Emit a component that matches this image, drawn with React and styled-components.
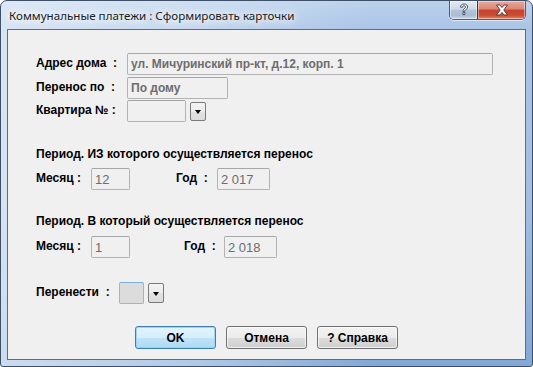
import React from "react";
import styled, { createGlobalStyle } from "styled-components";

const Global = createGlobalStyle`
  html, body { margin: 0; padding: 0; background: #ffffff; }
  * { box-sizing: border-box; }
`;

const Window = styled.div`
  width: 533px;
  height: 367px;
  border: 1px solid #3e4f66;
  border-radius: 7px 7px 3px 3px;
  background:
    linear-gradient(to right, rgba(235,242,250,0.7) 0%, rgba(225,236,248,0.5) 35%, rgba(170,198,230,0.0) 70%),
    linear-gradient(to bottom, #bcd2ec 0px, #a9c4e6 28px, #a2bfe2 55%, #82a8d6 100%);
  display: flex;
  flex-direction: column;
  overflow: hidden;
  font-family: "Liberation Sans", Arial, sans-serif;
`;

const TitleBar = styled.div`
  height: 28px;
  display: flex;
  align-items: flex-start;
  padding: 0 6px 0 8px;
`;

const Title = styled.div`
  font-family: "Noto Sans", "Open Sans", sans-serif;
  font-size: 11.6px;
  color: #1b1b1b;
  line-height: 16px;
  margin-top: 7px;
  text-shadow: 0 0 6px #ffffff, 0 0 10px #ffffff, 0 0 14px rgba(255,255,255,0.9);
`;

const CaptionButtons = styled.div`
  margin-left: auto;
  display: flex;
  height: 19px;
  border: 1px solid #4d5e75;
  border-top: none;
  border-radius: 0 0 5px 5px;
  overflow: hidden;
  box-shadow: 0 1px 0 rgba(255,255,255,0.6);
`;

const CaptionButton = styled.div`
  width: ${(p) => p.$w}px;
  height: 100%;
  display: flex;
  align-items: center;
  justify-content: center;
  border-left: ${(p) => (p.$close ? "1px solid #5a2a22" : "none")};
  background: ${(p) =>
    p.$close
      ? "linear-gradient(to bottom, #e9a99b 0%, #d98675 45%, #c7432e 50%, #cb4d33 80%, #e2866a 100%)"
      : "linear-gradient(to bottom, #e3ebf5 0%, #cdd9e9 45%, #b3c4db 50%, #aabdd6 80%, #c9d7ea 100%)"};
  box-shadow: inset 0 0 0 1px rgba(255,255,255,0.45);
`;

const Client = styled.div`
  margin: 0 6px;
  height: 331px;
  border: 1px solid #5c6d85;
  background: #f0f0f0;
  padding: 23px 0 0 28px;
  display: flex;
  flex-direction: column;
`;

const Row = styled.div`
  display: flex;
  align-items: center;
  height: 22px;
  margin-top: ${(p) => p.$mt || 0}px;
`;

const Label = styled.div`
  width: ${(p) => p.$w}px;
  margin-left: ${(p) => p.$ml || 0}px;
  font-size: 12px;
  font-weight: bold;
  color: #000;
  white-space: pre;
  margin-top: -3px;
  flex-shrink: 0;
`;

const Heading = styled.div`
  font-size: 12px;
  font-weight: bold;
  line-height: 14px;
  color: #000;
  margin-top: ${(p) => p.$mt}px;
`;

const Box = styled.div`
  width: ${(p) => p.$w}px;
  height: ${(p) => p.$h || 22}px;
  border: 1px solid ${(p) => (p.$focus ? "#8cb9e3" : "#b3b3b3")};
  border-top-color: ${(p) => (p.$focus ? "#7eaedc" : "#a6a6a6")};
  border-radius: 2px;
  background: ${(p) => (p.$focus ? "#dcdcdc" : "#f0f0f0")};
  color: #6d6d6d;
  font-size: ${(p) => (p.$num ? "13px" : "12px")};
  font-weight: ${(p) => (p.$num ? "normal" : "bold")};
  padding-left: 3px;
  display: flex;
  align-items: center;
  white-space: pre;
  flex-shrink: 0;
`;

const DropButton = styled.div`
  width: 16px;
  height: ${(p) => p.$h}px;
  margin-left: ${(p) => p.$ml}px;
  border: 1px solid #7a7a7a;
  border-radius: 2px;
  background: linear-gradient(to bottom, #f4f4f4 0%, #ececec 50%, #e2e2e2 51%, #dcdcdc 100%);
  display: flex;
  align-items: center;
  justify-content: center;
  padding-top: 1px;
`;

const Arrow = styled.div`
  width: 0;
  height: 0;
  border-left: 3.5px solid transparent;
  border-right: 3.5px solid transparent;
  border-top: 4px solid #000;
`;

const Buttons = styled.div`
  display: flex;
  justify-content: center;
  gap: 10px;
  margin-top: 22px;
  margin-left: -28px;
`;

const Button = styled.div`
  width: 81px;
  height: 23px;
  border: 1px solid ${(p) => (p.$default ? "#3c7fb1" : "#707070")};
  border-radius: 3px;
  background: ${(p) =>
    p.$default
      ? "linear-gradient(to bottom, #e5f4fc 0%, #d6eefb 50%, #c0e4f8 51%, #acdaf4 100%)"
      : "linear-gradient(to bottom, #f2f2f2 0%, #ebebeb 50%, #dddddd 51%, #cfcfcf 100%)"};
  box-shadow: inset 0 0 0 1px ${(p) => (p.$default ? "#9fd3f2" : "rgba(255,255,255,0.7)")};
  display: flex;
  align-items: center;
  justify-content: center;
  font-size: 12px;
  font-weight: bold;
  color: #000;
`;

const HelpGlyph = () => (
  <svg width="12" height="14" viewBox="0 0 12 14">
    <path
      d="M2.5 4.2 C2.5 2 4 1 6 1 C8.3 1 9.6 2.2 9.6 4 C9.6 5.6 8.4 6.2 7.5 6.8 C6.9 7.2 6.8 7.6 6.8 8.4 L5 8.4 C5 7.2 5.3 6.4 6.3 5.7 C7.1 5.2 7.6 4.8 7.6 4.1 C7.6 3.3 7 2.8 6 2.8 C5 2.8 4.4 3.4 4.4 4.4 Z M4.9 9.6 L6.9 9.6 L6.9 11.6 L4.9 11.6 Z"
      fill="#ffffff"
      stroke="#3b4a5e"
      strokeWidth="0.9"
      strokeLinejoin="round"
    />
  </svg>
);

const CloseGlyph = () => (
  <svg width="14" height="12" viewBox="0 0 14 12">
    <path
      d="M1.5 1 L5 1 L7 3.6 L9 1 L12.5 1 L8.8 6 L12.5 11 L9 11 L7 8.4 L5 11 L1.5 11 L5.2 6 Z"
      fill="#ffffff"
      stroke="#5a2a22"
      strokeWidth="0.9"
      strokeLinejoin="round"
    />
  </svg>
);

export default function App() {
  return (
    <>
      <Global />
      <Window>
        <TitleBar>
          <Title>Коммунальные платежи : Сформировать карточки</Title>
          <CaptionButtons>
            <CaptionButton $w={27}>
              <HelpGlyph />
            </CaptionButton>
            <CaptionButton $w={48} $close>
              <CloseGlyph />
            </CaptionButton>
          </CaptionButtons>
        </TitleBar>
        <Client>
          <Row>
            <Label $w={91}>{"Адрес дома  :"}</Label>
            <Box $w={366}>ул. Мичуринский пр-кт, д.12, корп. 1</Box>
          </Row>
          <Row $mt={2}>
            <Label $w={91}>{"Перенос по  :"}</Label>
            <Box $w={101}>По дому</Box>
          </Row>
          <Row $mt={1}>
            <Label $w={91}>{"Квартира № :"}</Label>
            <Box $w={59} />
            <DropButton $h={19} $ml={4}>
              <Arrow />
            </DropButton>
          </Row>

          <Heading $mt={25}>Период. ИЗ которого осуществляется перенос</Heading>
          <Row $mt={7}>
            <Label $w={55}>{"Месяц :"}</Label>
            <Box $w={39} $num>12</Box>
            <Label $w={41} $ml={46}>{"Год  :"}</Label>
            <Box $w={53} $num>2 017</Box>
          </Row>

          <Heading $mt={24}>Период. В который осуществляется перенос</Heading>
          <Row $mt={8}>
            <Label $w={55}>{"Месяц :"}</Label>
            <Box $w={39} $num>1</Box>
            <Label $w={40} $ml={54}>{"Год  :"}</Label>
            <Box $w={53} $num>2 018</Box>
          </Row>

          <Row $mt={24}>
            <Label $w={83}>{"Перенести  :"}</Label>
            <Box $w={25} $focus />
            <DropButton $h={20} $ml={4}>
              <Arrow />
            </DropButton>
          </Row>

          <Buttons>
            <Button $default>OK</Button>
            <Button>Отмена</Button>
            <Button>? Справка</Button>
          </Buttons>
        </Client>
      </Window>
    </>
  );
}
